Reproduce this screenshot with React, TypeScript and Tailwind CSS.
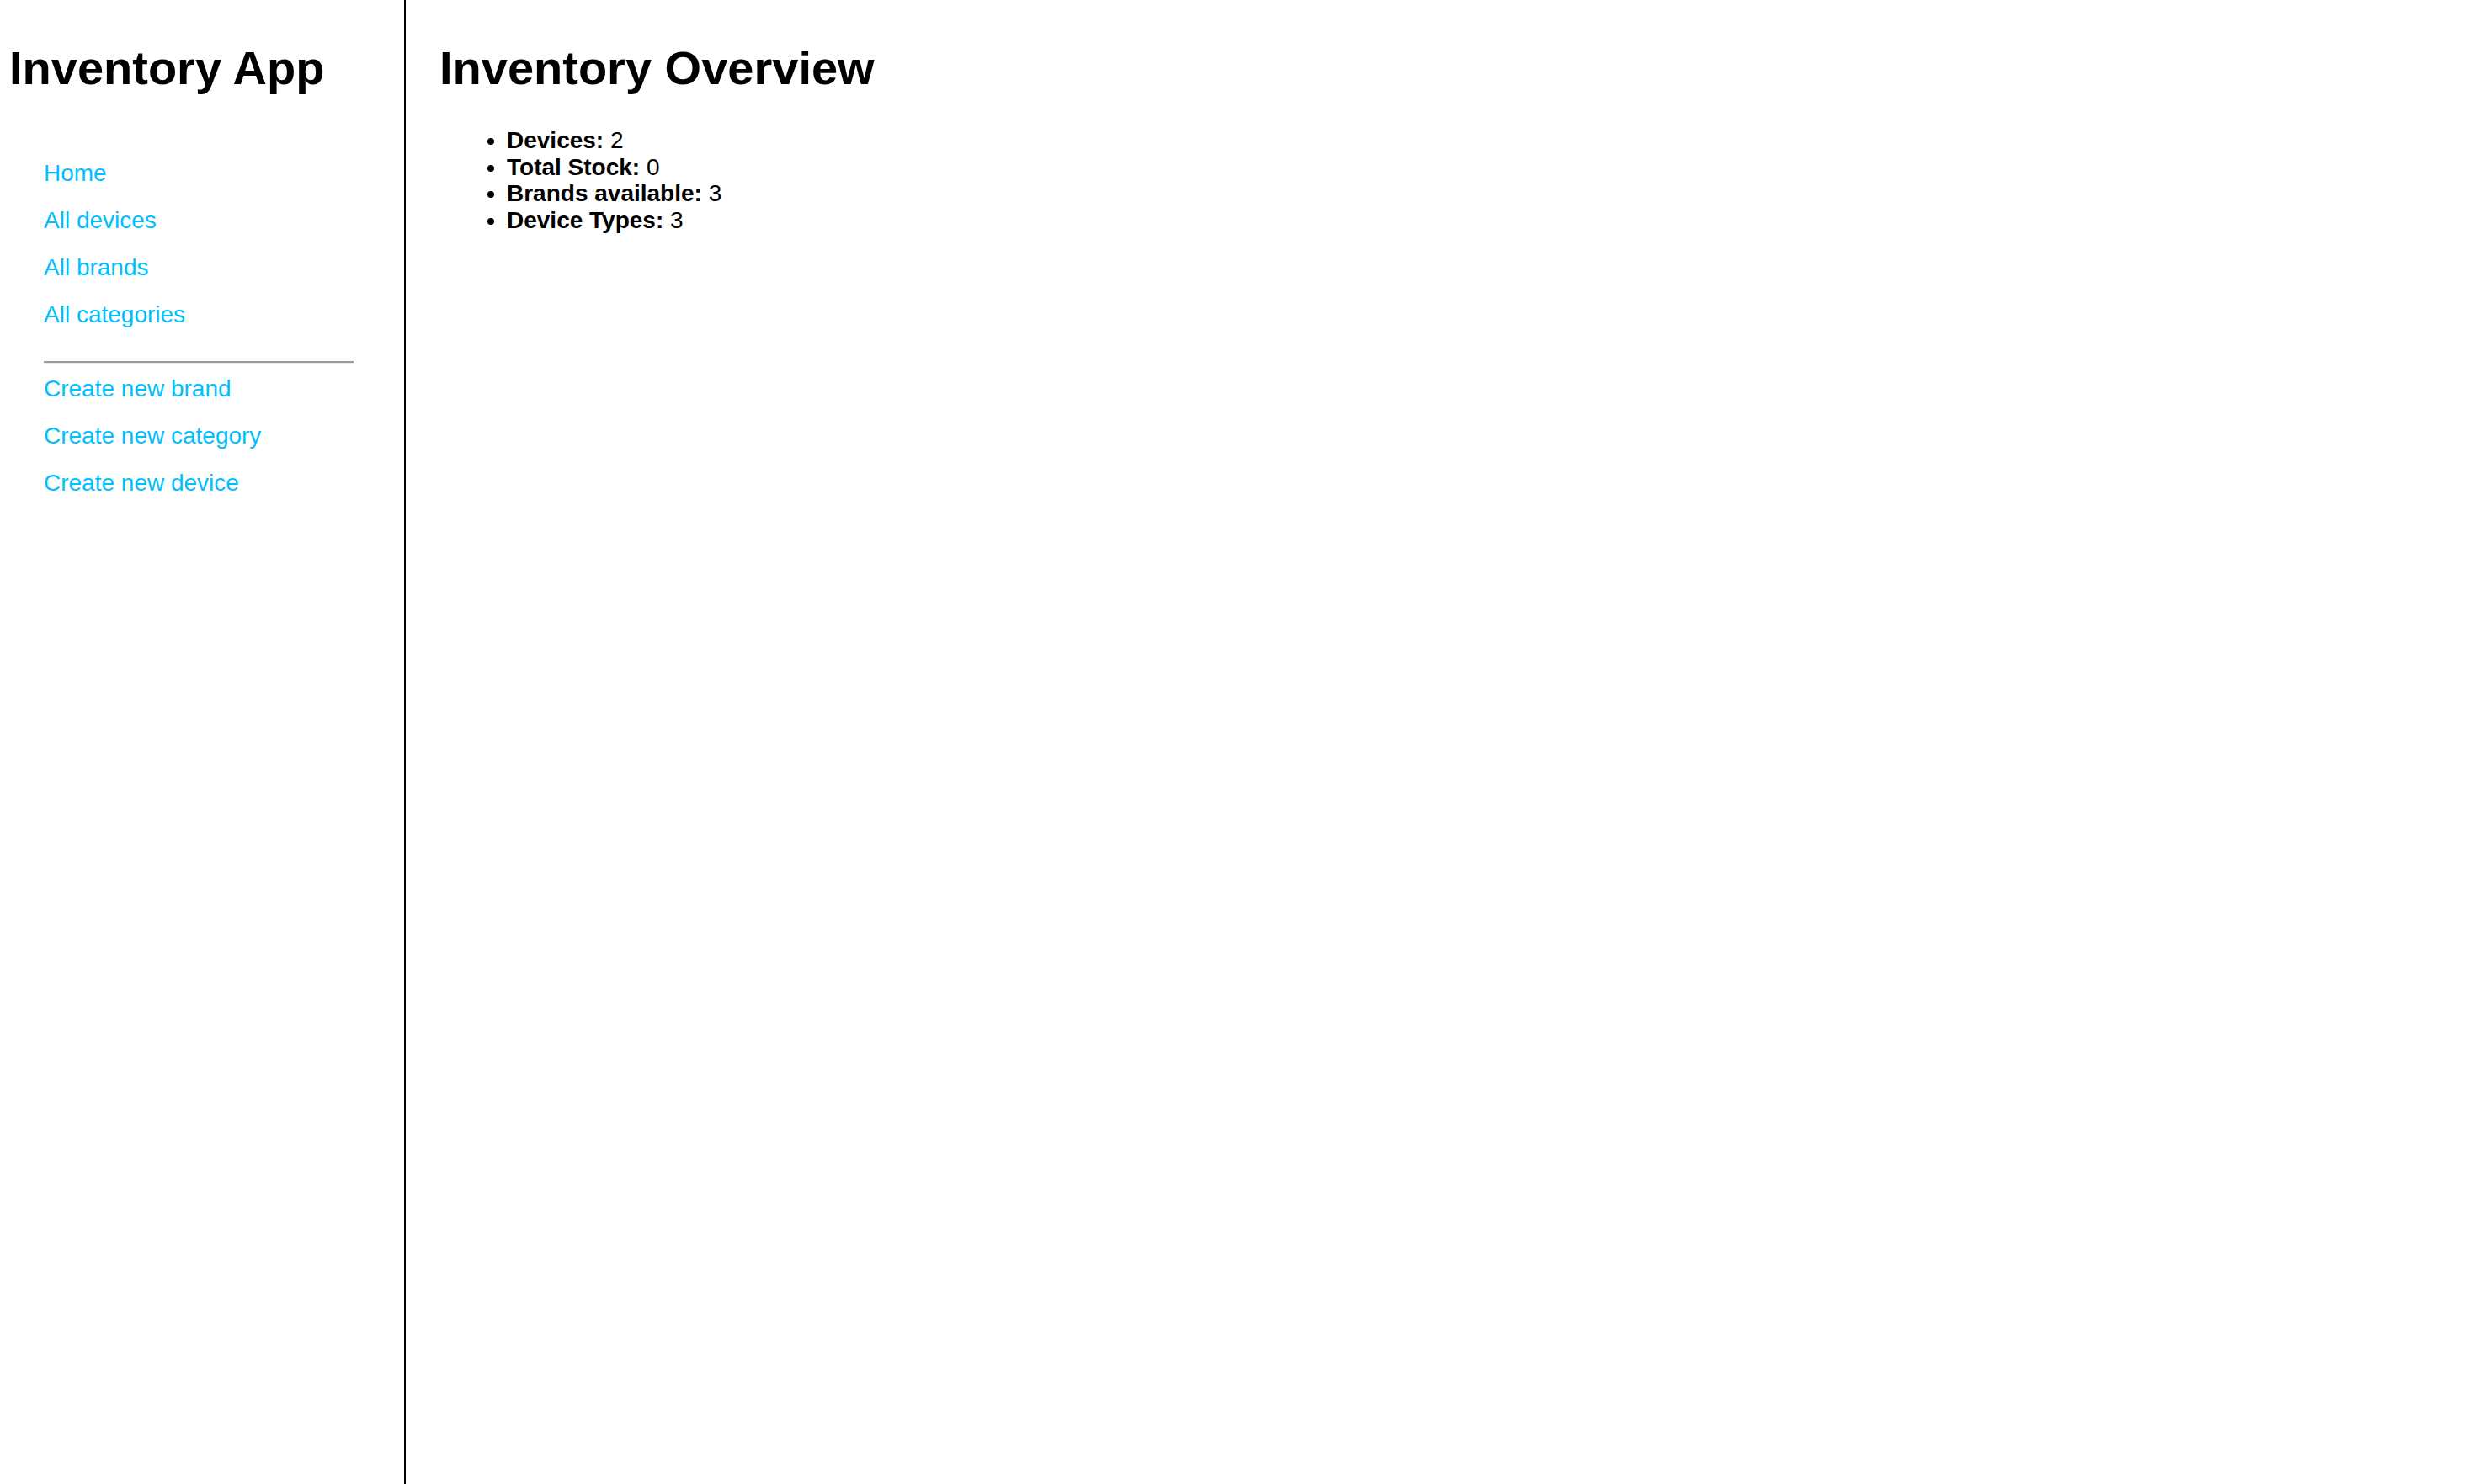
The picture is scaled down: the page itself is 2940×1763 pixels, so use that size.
import { FC } from "react"

const navLinks = ["Home", "All devices", "All brands", "All categories"]
const createLinks = ["Create new brand", "Create new category", "Create new device"]

const stats = [
    { label: "Devices:", value: 2 },
    { label: "Total Stock:", value: 0 },
    { label: "Brands available:", value: 3 },
    { label: "Device Types:", value: 3 },
]

const NavLink: FC<{ label: string }> = ({ label }) => (
    <a href="#" className="block leading-[56px] text-[#00bfff] no-underline">
        {label}
    </a>
)

const Sidebar: FC = () => {
    return <aside className="w-[482px] shrink-0 border-r-2 border-black pl-[11px]">
        <h1 className="mt-[49px] text-[56px] font-bold leading-[1.149]">Inventory App</h1>
        <nav className="mt-[65px] ml-[41px] w-[368px] text-[28px]">
            {navLinks.map(l => <NavLink key={l} label={l} />)}
            <hr className="mt-[26.5px] mb-[2.5px] h-[3px] border-0 border-t-[2px] border-b border-t-[#9a9a9a] border-b-[#ececec]" />
            {createLinks.map(l => <NavLink key={l} label={l} />)}
        </nav>
    </aside>
}

const Overview: FC = () => {
    return <main className="flex-1 pl-[40px]">
        <h1 className="mt-[49px] text-[56px] font-bold leading-[1.149]">Inventory Overview</h1>
        <ul className="mt-[38px] list-disc pl-[80px] text-[28px] leading-[31.5px]">
            {stats.map(s => <li key={s.label}>
                <span className="font-bold">{s.label}</span> {s.value}
            </li>)}
        </ul>
    </main>
}

export default function App() {
    return <div className="flex min-h-screen bg-white text-black font-['Liberation_Sans',Arial,sans-serif]">
        <Sidebar />
        <Overview />
    </div>
}
